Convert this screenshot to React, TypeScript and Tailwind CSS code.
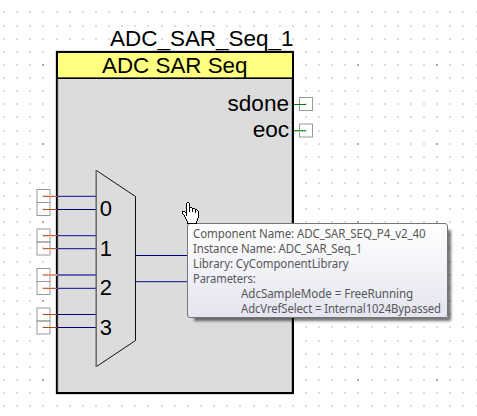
import React from "react";

const columns = [3, 16, 29, 42, 56, 69, 82, 95, 108, 121, 134, 147, 161, 174, 187, 200, 213, 226, 239, 253, 266, 279, 292, 305, 318, 331, 344, 357, 371, 384, 397, 410, 423, 436, 449, 462, 476];
const rows = [11, 25, 38, 51, 64, 77, 90, 103, 116, 130, 143, 156, 169, 182, 195, 208, 221, 234, 247, 261, 274, 287, 300, 313, 326, 340, 353, 366, 379, 392, 405];

const hand = [
  ".....##..........",
  "....#oo#.........",
  "....#oo#.........",
  "....#oo#.........",
  "....#oo#.........",
  "....#oo###.......",
  "....#oo#oo###....",
  "....#oo#oo#oo##..",
  "....#oo#oo#oo#o#.",
  "###.#oo#oo#oo#oo#",
  "#oo##oooooooo#oo#",
  "#ooo#ooooooooooo#",
  ".#oo#ooooooooooo#",
  "..#o#ooooooooooo#",
  "..#ooooooooooooo#",
  "...#oooooooooooo#",
  "...#ooooooooooo#.",
  "....#oooooooooo#.",
  "....#oooooooooo#.",
  ".....#oooooooo#..",
  ".....#oooooooo#..",
  ".....##########..",
];

type Wire = { y: number; h: number; color: string; pin: string };

const inputs: Wire[] = [
  { y: 196, h: 1, color: "#3333a3", pin: "#c76236" },
  { y: 209, h: 1, color: "#000080", pin: "#b84a14" },
  { y: 235, h: 1, color: "#3333a3", pin: "#c76236" },
  { y: 248, h: 1, color: "#3333a3", pin: "#c76236" },
  { y: 274, h: 2, color: "#6666b2", pin: "#df9a7c" },
  { y: 288, h: 1, color: "#3333a3", pin: "#c76236" },
  { y: 314, h: 1, color: "#000080", pin: "#b84a14" },
  { y: 327, h: 1, color: "#000080", pin: "#b84a14" },
];

const softEdges = [195, 236, 249, 287];
const terminals = [189.5, 202.5, 229, 242, 268.5, 281.5, 308, 321];

function Grid() {
  return (
    <g shapeRendering="crispEdges">
      {rows.flatMap((y, r) =>
        columns.map((x, c) => (
          <rect key={`${x}-${y}`} x={x} y={y} width={2} height={2} fill={r % 6 === 4 && c % 6 === 3 ? "#aaaaaa" : "#dcdcdc"} />
        )),
      )}
    </g>
  );
}

function Schematic() {
  return (
    <svg className="block h-[416px] w-[477px]" viewBox="0 0 477 416" fontFamily="'Liberation Sans', Arial, sans-serif" fontSize="22">
      <Grid />
      <rect x="55.7" y="50.7" width="238.3" height="343.6" fill="#8a8a8a" />
      <rect x="56" y="51" width="238" height="343" fill="#000" />
      <rect x="58" y="53" width="234" height="339" fill="#dcdcdc" />
      <path d="M58 79V392M291.5 79V392" stroke="#999" strokeWidth=".7" />
      <rect x="58" y="53" width="234" height="24.5" fill="#ffff80" />
      <rect x="56" y="77.4" width="238" height="1.6" fill="#000" />
      <text x="110" y="45.8" textLength="183.5" lengthAdjust="spacingAndGlyphs">ADC_SAR_Seq_1</text>
      <text x="102" y="72.6" textLength="145.5" lengthAdjust="spacingAndGlyphs">ADC SAR Seq</text>
      <text x="227.5" y="111" textLength="61.5" lengthAdjust="spacingAndGlyphs">sdone</text>
      <text x="252.7" y="137.2" textLength="36.5" lengthAdjust="spacingAndGlyphs">eoc</text>
      <g fill="none" stroke="#999" strokeWidth="1">
        <rect x="299.5" y="97.5" width="13" height="13" />
        <rect x="299.5" y="124" width="13" height="13" />
        {terminals.map((y) => (
          <rect key={y} x="37" y={y} width="13" height="13" />
        ))}
      </g>
      <rect x="294" y="104" width="12" height="1" fill="#008000" />
      <rect x="294" y="130" width="12" height="1" fill="#339933" />
      <rect x="294" y="131" width="12" height="1" fill="#a8d6a8" />
      {softEdges.map((y) => (
        <g key={y}>
          <rect x="58" y={y} width="38" height="1" fill="#b5b5d2" />
          <rect x="43" y={y} width="13" height="1" fill="#f3d3c6" />
        </g>
      ))}
      {inputs.map((w) => (
        <g key={w.y}>
          <rect x="57" y={w.y} width="39" height={w.h} fill={w.color} />
          <rect x="43" y={w.y} width="14" height={w.h} fill={w.pin} />
        </g>
      ))}
      <path d="M96.5 170.5L135.5 196.5V340.5L96.5 366.5" fill="none" stroke="#111" strokeWidth="1" />
      <path d="M96.2 170V367" stroke="#666" strokeWidth="1.5" />
      <rect x="136" y="255" width="52" height="1" fill="#000080" />
      <rect x="136" y="281" width="52" height="1" fill="#3333a3" />
      <rect x="136" y="282" width="52" height="1" fill="#b5b5d2" />
      <text x="99.7" y="216.3">0</text>
      <text x="99.7" y="255.7">1</text>
      <text x="99.7" y="295">2</text>
      <text x="99.7" y="334.5">3</text>
    </svg>
  );
}

function Tooltip() {
  return (
    <div className="absolute left-[187px] top-[223px] h-[95px] w-[261px] rounded-[3px] border border-[#767676] bg-linear-to-b from-white to-[#e4e5f0] pl-[5px] pt-[2px] font-['Noto_Sans',sans-serif] text-[12px] leading-[15px] whitespace-pre text-[#575757] shadow-[5px_5px_3px_-2px_rgba(0,0,0,0.55)]">
      <div className="w-max origin-left scale-x-[0.96] tracking-[-0.1px]">Component Name: ADC_SAR_SEQ_P4_v2_40</div>
      <div className="w-max origin-left scale-x-[0.95] tracking-[-0.1px]">Instance Name: ADC_SAR_Seq_1</div>
      <div className="w-max origin-left scale-x-[0.957] tracking-[-0.1px]">Library: CyComponentLibrary</div>
      <div className="w-max origin-left scale-x-[0.93] tracking-[-0.1px]">Parameters:</div>
      <div className="ml-12 w-max origin-left scale-x-[0.97] tracking-[-0.1px]">AdcSampleMode = FreeRunning</div>
      <div className="ml-12 w-max origin-left scale-x-[0.942] tracking-[-0.1px]">AdcVrefSelect = Internal1024Bypassed</div>
    </div>
  );
}

function Cursor() {
  return (
    <svg className="absolute left-[182px] top-[202px] h-[22px] w-[17px]" viewBox="0 0 17 22" shapeRendering="crispEdges">
      {hand.flatMap((line, y) =>
        line.split("").map((p, x) =>
          p === "." ? null : <rect key={`${x}-${y}`} x={x} y={y} width={1} height={1} fill={p === "#" ? "#000" : "#fff"} />,
        ),
      )}
    </svg>
  );
}

export default function App() {
  return (
    <main className="relative h-[416px] w-[477px] overflow-hidden bg-white">
      <Schematic />
      <Tooltip />
      <Cursor />
    </main>
  );
}
